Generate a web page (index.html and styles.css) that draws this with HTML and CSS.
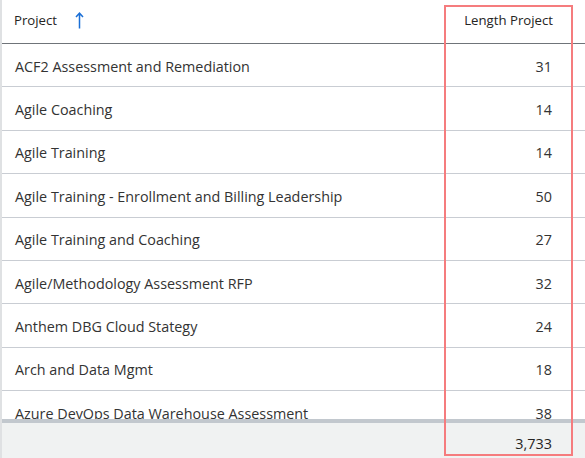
FILE: index.html
```html
<!DOCTYPE html>
<html>
<head>
<meta charset="utf-8">
<link rel="stylesheet" href="styles.css">
</head>
<body>
<div class="table">
  <div class="head row">
    <div class="cell name">Project <svg class="sort" width="9" height="17" viewBox="0 0 9 17"><path d="M4.5 16.5V1.5M1 5L4.5 1.2L8 5" fill="none" stroke="#1b6fd6" stroke-width="1.5"/></svg></div>
    <div class="cell num">Length Project</div>
  </div>
  <div class="body">
    <div class="row"><div class="cell name">ACF2 Assessment and Remediation</div><div class="cell num">31</div></div>
    <div class="row"><div class="cell name">Agile Coaching</div><div class="cell num">14</div></div>
    <div class="row"><div class="cell name">Agile Training</div><div class="cell num">14</div></div>
    <div class="row"><div class="cell name">Agile Training - Enrollment and Billing Leadership</div><div class="cell num">50</div></div>
    <div class="row"><div class="cell name">Agile Training and Coaching</div><div class="cell num">27</div></div>
    <div class="row"><div class="cell name">Agile/Methodology Assessment RFP</div><div class="cell num">32</div></div>
    <div class="row"><div class="cell name">Anthem DBG Cloud Stategy</div><div class="cell num">24</div></div>
    <div class="row"><div class="cell name">Arch and Data Mgmt</div><div class="cell num">18</div></div>
    <div class="row"><div class="cell name">Azure DevOps Data Warehouse Assessment</div><div class="cell num">38</div></div>
  </div>
  <div class="foot row">
    <div class="cell name"></div>
    <div class="cell num">3,733</div>
  </div>
</div>
<div class="highlight"></div>
</body>
</html>
```
FILE: styles.css
```css
html, body {
  margin: 0;
  padding: 0;
  background: #ffffff;
}
body {
  width: 585px;
  height: 458px;
  overflow: hidden;
  position: relative;
  font-family: "Open Sans", "Noto Sans", sans-serif;
  color: #333333;
}
.table {
  display: flex;
  flex-direction: column;
  height: 458px;
  border-left: 2px solid #dfe1e3;
  box-sizing: border-box;
}
.row {
  display: grid;
  grid-template-columns: 1fr 140px;
  align-items: center;
  height: 43.375px;
  box-sizing: border-box;
  border-bottom: 1px solid #c9cdd3;
}
.head {
  height: 44px;
  padding-bottom: 3px;
  border-bottom: 1px solid #6f7479;
  font-size: 13.2px;
  color: #252423;
}
.head .name {
  padding-left: 12px;
  display: flex;
  align-items: center;
  gap: 18px;
}
.sort {
  margin-top: 1px;
}
.body {
  height: 375px;
  overflow: hidden;
  font-size: 14.35px;
  flex: none;
}
.body .row .cell {
  padding-top: 2px;
}
.body .row .name {
  padding-left: 13px;
  white-space: nowrap;
}
.cell.num {
  text-align: right;
  padding-right: 33px;
}
.head .num {
  padding-right: 32px;
}
.foot {
  flex: 1;
  height: auto;
  border-bottom: none;
  border-top: 4px solid #c2c8ce;
  background: #f0f2f2;
  font-size: 14.4px;
  color: #252423;
  align-items: end;
  padding-bottom: 5px;
}
.highlight {
  position: absolute;
  left: 444px;
  top: 5px;
  width: 129px;
  height: 451px;
  box-sizing: border-box;
  border: 2px solid #f57c7e;
}
```
